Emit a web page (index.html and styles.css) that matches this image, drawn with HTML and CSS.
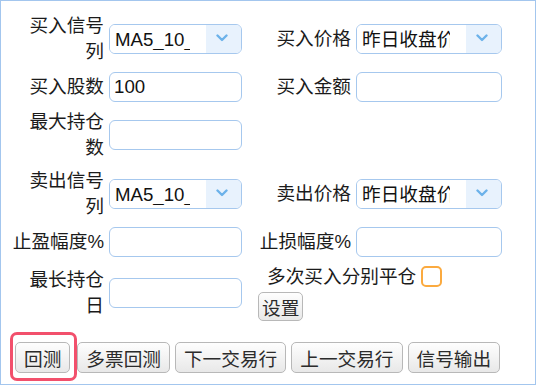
FILE: index.html
```html
<!DOCTYPE html>
<html lang="zh-CN">
  <head>
    <meta charset="UTF-8" />
    <meta name="viewport" content="width=device-width, initial-scale=1.0" />
    <title>回测设置</title>
    <link rel="stylesheet" href="styles.css">
  </head>
  <body>
    <div class="panel">
      <form class="backtest-form">
        <label class="field-label" for="buy-signal">买入信号列</label>
        <div class="select">
          <select id="buy-signal">
            <option>MA5_10_金叉</option>
          </select>
          <span class="arrow"><svg width="12" height="8" viewBox="0 0 12 8"><path d="M1.5 1.5 L6 6 L10.5 1.5" fill="none" stroke="#6cb2ea" stroke-width="2.4" stroke-linecap="round" stroke-linejoin="round"/></svg></span>
        </div>
        <label class="field-label" for="buy-price">买入价格</label>
        <div class="select">
          <select id="buy-price">
            <option>昨日收盘价</option>
          </select>
          <span class="arrow"><svg width="12" height="8" viewBox="0 0 12 8"><path d="M1.5 1.5 L6 6 L10.5 1.5" fill="none" stroke="#6cb2ea" stroke-width="2.4" stroke-linecap="round" stroke-linejoin="round"/></svg></span>
        </div>

        <label class="field-label" for="buy-shares">买入股数</label>
        <input type="text" id="buy-shares" value="100" />
        <label class="field-label" for="buy-amount">买入金额</label>
        <input type="text" id="buy-amount" />

        <label class="field-label" for="max-hold">最大持仓数</label>
        <input type="text" id="max-hold" />
        <span></span>
        <span></span>

        <label class="field-label" for="sell-signal">卖出信号列</label>
        <div class="select">
          <select id="sell-signal">
            <option>MA5_10_死叉</option>
          </select>
          <span class="arrow"><svg width="12" height="8" viewBox="0 0 12 8"><path d="M1.5 1.5 L6 6 L10.5 1.5" fill="none" stroke="#6cb2ea" stroke-width="2.4" stroke-linecap="round" stroke-linejoin="round"/></svg></span>
        </div>
        <label class="field-label" for="sell-price">卖出价格</label>
        <div class="select">
          <select id="sell-price">
            <option>昨日收盘价</option>
          </select>
          <span class="arrow"><svg width="12" height="8" viewBox="0 0 12 8"><path d="M1.5 1.5 L6 6 L10.5 1.5" fill="none" stroke="#6cb2ea" stroke-width="2.4" stroke-linecap="round" stroke-linejoin="round"/></svg></span>
        </div>

        <label class="field-label" for="take-profit">止盈幅度%</label>
        <input type="text" id="take-profit" />
        <label class="field-label" for="stop-loss">止损幅度%</label>
        <input type="text" id="stop-loss" />

        <label class="field-label" for="max-days">最长持仓日</label>
        <input type="text" id="max-days" />
        <div class="multi">
          <label class="multi-label">多次买入分别平仓 <input type="checkbox" class="check" /></label>
          <button type="button" class="small-btn">设置</button>
        </div>
      </form>

      <div class="actions">
        <span class="highlight"><button type="button">回测</button></span>
        <button type="button">多票回测</button>
        <button type="button">下一交易行</button>
        <button type="button">上一交易行</button>
        <button type="button">信号输出</button>
      </div>

      <div class="result"></div>
    </div>
  </body>
</html>
```
FILE: styles.css
```css
body {
  margin: 0;
  font-family: "Liberation Sans", "Noto Sans CJK SC", sans-serif;
  font-size: 18.67px;
  color: #1b1b1b;
  background: #fff;
}
.panel {
  width: 536px;
  height: 385px;
  box-sizing: border-box;
  border: 1px solid #a3c6ee;
  overflow-y: scroll;
  padding: 12px 0 0 9px;
}
.panel::-webkit-scrollbar {
  width: 20px;
}
.panel::-webkit-scrollbar-track {
  background: #f8f8f8;
}
.panel::-webkit-scrollbar-thumb {
  background-color: #8c8c8c;
  border-left: 5px solid transparent;
  border-right: 3px solid transparent;
  background-clip: padding-box;
  border-radius: 10px;
}
.panel::-webkit-scrollbar-button:single-button:vertical:decrement {
  height: 27px;
  background:
    linear-gradient(to bottom right, transparent 50%, #8a8a8a 50%) 6px 12px / 6px 6px no-repeat,
    linear-gradient(to bottom left, transparent 50%, #8a8a8a 50%) 12px 12px / 6px 6px no-repeat,
    #f8f8f8;
}
.panel::-webkit-scrollbar-button:single-button:vertical:increment {
  height: 0;
}
.backtest-form {
  display: grid;
  grid-template-columns: 92px 133px 104px 146px;
  column-gap: 5px;
  row-gap: 7px;
  align-items: center;
  margin-left: 2px;
}
.field-label {
  text-align: right;
  line-height: 26px;
}
.backtest-form input[type="text"] {
  width: 100%;
  height: 30px;
  box-sizing: border-box;
  border: 1px solid #a6c8ee;
  border-radius: 6px;
  padding: 0 4px;
  font: inherit;
  color: #111;
  outline: none;
}
.select {
  display: flex;
  height: 30px;
  box-sizing: border-box;
  border: 1px solid #a6c8ee;
  border-radius: 6px;
  overflow: hidden;
  background: #fff;
}
.select select {
  flex: 1;
  min-width: 0;
  appearance: none;
  -webkit-appearance: none;
  border: none;
  background: #fff;
  font: inherit;
  color: #111;
  padding: 0 16px 0 5px;
  outline: none;
}
.select .arrow {
  width: 35px;
  background: #e8f2fd;
  display: flex;
  align-items: center;
  justify-content: center;
  padding: 0 4px 3px 0;
  box-sizing: border-box;
}
.multi {
  grid-column: span 2;
  margin-left: 11px;
}
.multi-label {
  display: block;
  padding-left: 9px;
  line-height: 26px;
}
.check {
  appearance: none;
  -webkit-appearance: none;
  width: 21px;
  height: 21px;
  margin: 0;
  box-sizing: border-box;
  border: 2px solid #fbaa3f;
  border-radius: 5px;
  background: #fff;
  vertical-align: -4px;
}
button {
  font: inherit;
  color: #2b2b2b;
  background: linear-gradient(#fefefe, #e8e8e8);
  border: 1px solid #b8b8b8;
  border-radius: 5px;
  cursor: pointer;
}
.small-btn {
  display: block;
  height: 29px;
  padding: 0 3px;
  margin-top: 2px;
}
.actions {
  display: flex;
  align-items: flex-start;
  margin-top: 11px;
}
.actions button {
  height: 31px;
  padding: 0 8px;
  margin: 10px 5px 0 0;
}
.highlight {
  border: 3px solid #f2506c;
  border-radius: 7px;
  padding: 7px 4px 5px 2px;
  margin-right: 0;
}
.highlight button {
  display: block;
  margin: 0;
}
.result {
  min-height: 370px;
}
```
